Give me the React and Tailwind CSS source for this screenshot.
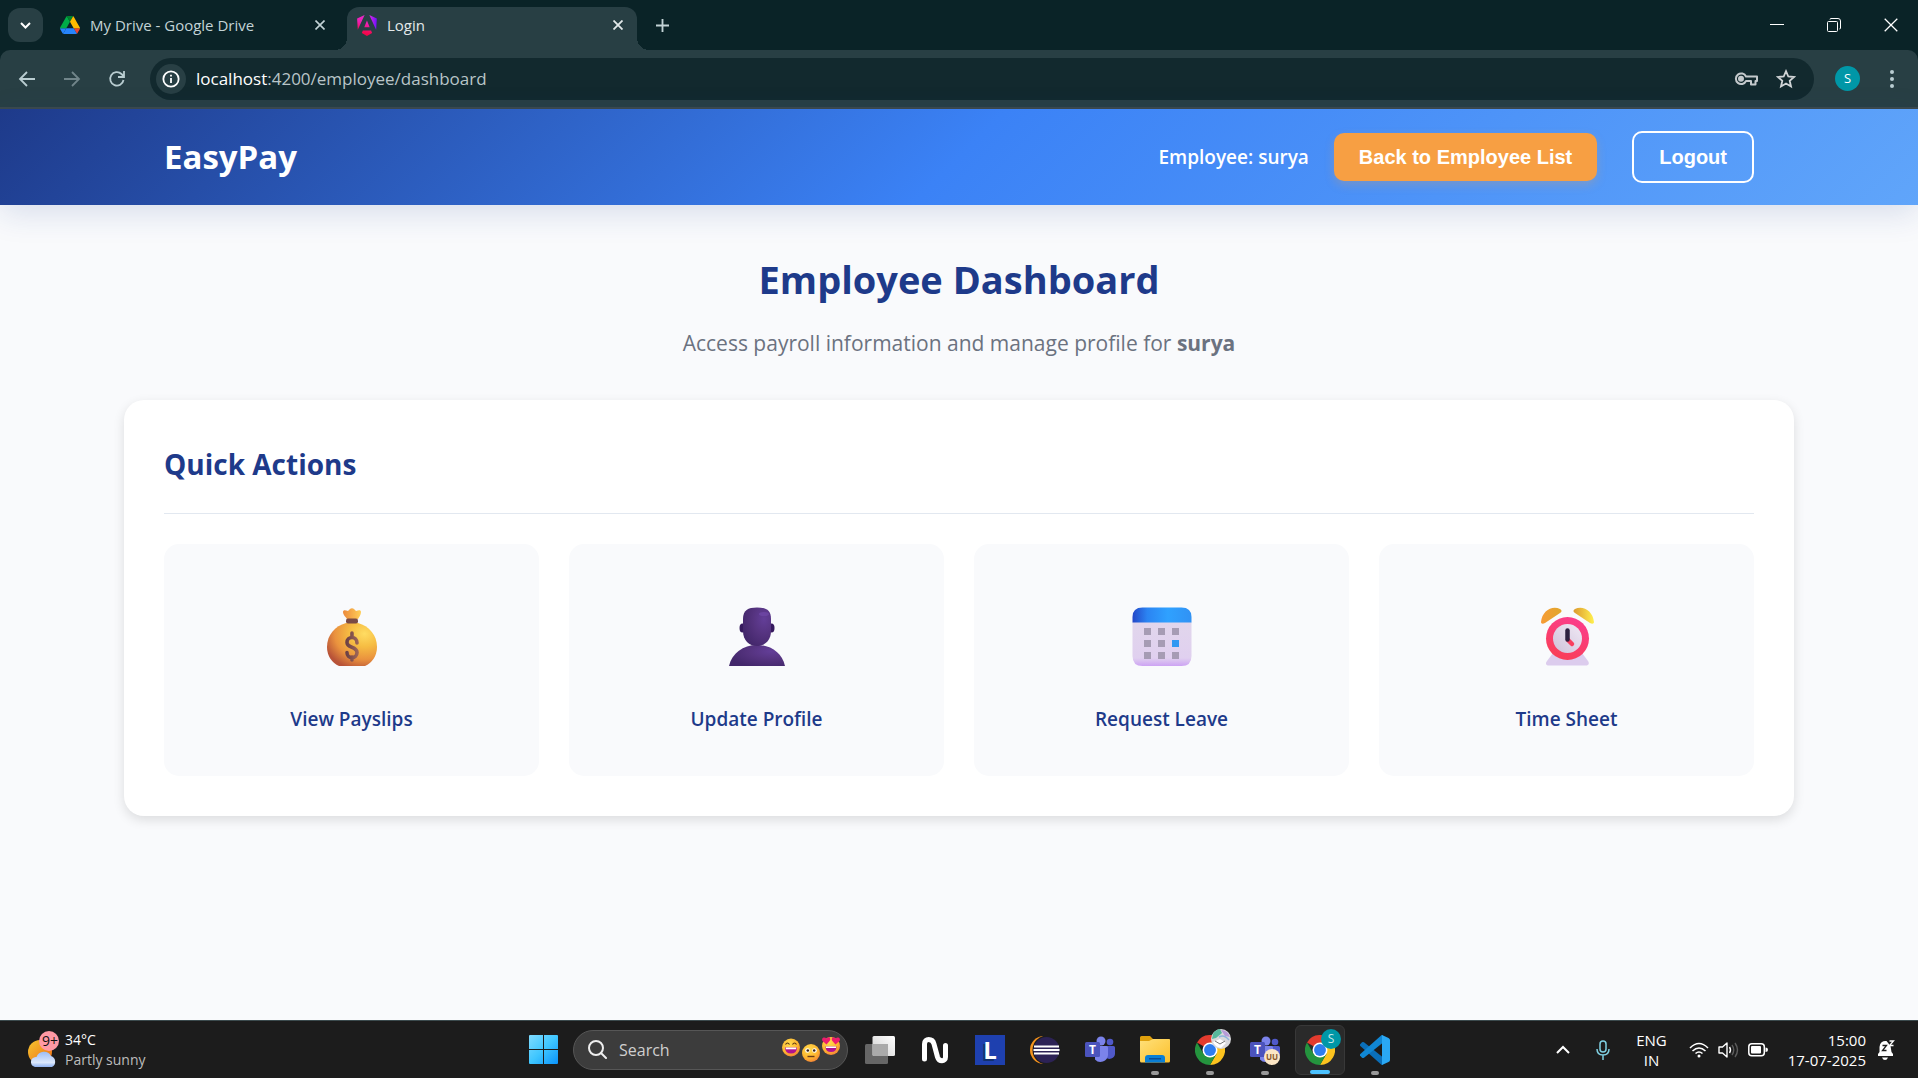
import React from "react";

const ui = "font-['Open_Sans','Noto_Sans',sans-serif]";

/* ---------- browser chrome icons ---------- */

function DriveIcon() {
  return (
    <svg width="20" height="18" viewBox="0 0 87.3 78" aria-hidden="true">
      <path fill="#2684fc" d="m6.6 66.85 3.85 6.65c.8 1.4 1.95 2.5 3.3 3.3L27.5 53H0c0 1.55.4 3.1 1.2 4.5z" />
      <path fill="#00ac47" d="M43.65 25 29.9 1.2c-1.35.8-2.5 1.9-3.3 3.3l-25.4 44A9.06 9.06 0 0 0 0 53h27.5z" />
      <path fill="#ea4335" d="M73.55 76.8c1.35-.8 2.5-1.9 3.3-3.3l1.6-2.75L86.1 57.5c.8-1.4 1.2-2.95 1.2-4.5H59.798l5.852 11.5z" />
      <path fill="#00832d" d="M43.65 25 57.4 1.2C56.05.4 54.5 0 52.9 0H34.4c-1.6 0-3.15.45-4.5 1.2z" />
      <path fill="#2684fc" d="M59.8 53H27.5L13.75 76.8c1.35.8 2.9 1.2 4.5 1.2h50.8c1.6 0 3.15-.45 4.5-1.2z" />
      <path fill="#ffba00" d="m73.4 26.5-12.7-22c-.8-1.4-1.95-2.5-3.3-3.3L43.65 25 59.8 53h27.45c0-1.55-.4-3.1-1.2-4.5z" />
    </svg>
  );
}

function AngularIcon() {
  return (
    <svg width="20" height="21" viewBox="0 0 223 236" aria-hidden="true">
      <defs>
        <linearGradient id="ng" x1="0.4" y1="1" x2="0.6" y2="0">
          <stop offset="0" stopColor="#f6003c" />
          <stop offset="0.25" stopColor="#f60a5c" />
          <stop offset="0.6" stopColor="#f01fb0" />
          <stop offset="1" stopColor="#e62ad0" />
        </linearGradient>
        <linearGradient id="ngSide" x1="0" y1="0" x2="1" y2="0">
          <stop offset="0" stopColor="#e02be0" />
          <stop offset="1" stopColor="#6c10ff" />
        </linearGradient>
      </defs>
      <path fill="url(#ng)" d="m168.972 202.017-57.933 33.056-57.934-33.056 11.783-28.556h92.301l11.783 28.556ZM111.039 62.675l30.357 73.803H80.681l30.358-73.803ZM7.937 165.115 0 39.192 84.69 0 7.937 165.115Z" />
      <path fill="url(#ngSide)" d="m222.077 39.192-8.019 125.923L137.387 0l84.69 39.192Z" />
    </svg>
  );
}

function Cross({ size = 10, width = 2 }) {
  return (
    <svg width={size} height={size} viewBox="0 0 10 10" fill="none" stroke="currentColor" strokeWidth={width} aria-hidden="true">
      <path d="M.5.5l9 9M9.5.5l-9 9" />
    </svg>
  );
}

function Line({ d, size = 20, width = 2, children }) {
  return (
    <svg width={size} height={size} viewBox="0 0 20 20" fill="none" stroke="currentColor" strokeWidth={width} aria-hidden="true">
      {d && <path d={d} />}
      {children}
    </svg>
  );
}

/* ---------- quick action pictures ---------- */

function MoneyBag() {
  return (
    <svg width="60" height="60" viewBox="0 0 60 60" aria-hidden="true">
      <defs>
        <radialGradient id="bag" cx="0.75" cy="0.25" r="0.85">
          <stop offset="0" stopColor="#ffdc62" />
          <stop offset="0.35" stopColor="#f6bd43" />
          <stop offset="0.7" stopColor="#ea923e" />
          <stop offset="1" stopColor="#b85338" />
        </radialGradient>
        <linearGradient id="bagTop" x1="0" x2="1">
          <stop offset="0" stopColor="#ec8a3c" />
          <stop offset="1" stopColor="#ffcf57" />
        </linearGradient>
        <linearGradient id="dollar" x1="0" x2="1">
          <stop offset="0" stopColor="#6d4146" />
          <stop offset="1" stopColor="#9a6356" />
        </linearGradient>
      </defs>
      <path fill="url(#bag)" d="M24 16h12c11 3 19 12 19 24 0 9-5 16-12 19H17C10 56 5 49 5 40c0-12 8-21 19-24Z" />
      <path fill="url(#bagTop)" d="M21 5c0-2 2-2 5-1l2-2c1-1 3-1 4 0l2 2c3-1 5-1 5 1 0 3-2 5-3 7H25c-1-2-4-4-4-7Z" />
      <rect x="24" y="11.500" width="12" height="5" rx="2" fill="#794a45" />
      <path d="M30 26v4m0 20v3M35 36c0-3.500-2.200-5.500-5-5.500s-5 2-5 5C25 41.500 35 39 35 45.500c0 3-2.200 5-5 5s-5-2-5-5" fill="none" stroke="url(#dollar)" strokeWidth="3.600" strokeLinecap="round" />
    </svg>
  );
}

function Bust() {
  return (
    <svg width="60" height="60" viewBox="0 0 60 60" aria-hidden="true">
      <defs>
        <radialGradient id="bust" cx="0.75" cy="0.3" r="0.8">
          <stop offset="0" stopColor="#633e98" />
          <stop offset="0.5" stopColor="#55337f" />
          <stop offset="1" stopColor="#43276b" />
        </radialGradient>
      </defs>
      <ellipse cx="15.500" cy="21" rx="3" ry="4.500" fill="#361a5e" />
      <ellipse cx="44.500" cy="21" rx="3" ry="4.500" fill="#361a5e" />
      <path fill="url(#bust)" d="M2 59C5 46 16 38 30 38s25 8 28 21Z" />
      <path fill="url(#bust)" d="M16 12C16 3 21 .5 30 .5S44 3 44 12v12c0 9-6 15-14 15s-14-6-14-15Z" />
      <ellipse cx="37" cy="7" rx="5" ry="2" fill="#7048a8" opacity="0.7" />
    </svg>
  );
}

function Calendar() {
  const dots = [0, 1, 2].flatMap((r) => [0, 1, 2].map((c) => [c, r]));
  return (
    <svg width="60" height="60" viewBox="0 0 60 60" aria-hidden="true">
      <defs>
        <linearGradient id="calTop" x1="0" x2="1">
          <stop offset="0" stopColor="#2447c8" />
          <stop offset="0.25" stopColor="#2b84f2" />
          <stop offset="0.6" stopColor="#2fa1ff" />
          <stop offset="1" stopColor="#3192f4" />
        </linearGradient>
        <linearGradient id="calBody" x1="0" y1="0" x2="0" y2="1">
          <stop offset="0" stopColor="#e1d6ec" />
          <stop offset="0.82" stopColor="#e0d0ef" />
          <stop offset="1" stopColor="#cda3f3" />
        </linearGradient>
      </defs>
      <path fill="url(#calBody)" d="M.5 15h59v34q0 10-10 10h-39Q.5 59 .5 49Z" />
      <path fill="url(#calTop)" d="M.5 15.500V10q0-9.500 10-9.500h39q10 0 10 9.500v5.500Z" />
      {dots.map(([c, r]) => (
        <rect key={`${c}${r}`} x={12 + c * 14} y={21 + r * 12} width="7" height="7" fill={c === 2 && r === 1 ? "#3198f2" : "#a69cb4"} />
      ))}
    </svg>
  );
}

function AlarmClock() {
  return (
    <svg width="60" height="60" viewBox="0 0 60 60" aria-hidden="true">
      <defs>
        <linearGradient id="bellL" x1="0" x2="1">
          <stop offset="0" stopColor="#f79b35" />
          <stop offset="1" stopColor="#e0a72c" />
        </linearGradient>
        <linearGradient id="bellR" x1="0" x2="1">
          <stop offset="0" stopColor="#dc982f" />
          <stop offset="1" stopColor="#fff04e" />
        </linearGradient>
        <linearGradient id="ring" x1="0.7" y1="0" x2="0.3" y2="1">
          <stop offset="0" stopColor="#fb3d8d" />
          <stop offset="1" stopColor="#f93e55" />
        </linearGradient>
        <linearGradient id="face" x1="1" y1="0" x2="0" y2="1">
          <stop offset="0" stopColor="#f0e9f5" />
          <stop offset="1" stopColor="#cfc1d9" />
        </linearGradient>
      </defs>
      <path fill="#dccced" d="M16 46h29l6 8c2 3 0 4.500-2 4.500H12c-3 0-4-2-2-4.500Z" />
      <path fill="url(#bellL)" d="M4 15C5 4 15-2 23 2c2 1 2 3 0 4L8 16c-2 1-4 1-4-1Z" />
      <path fill="url(#bellR)" d="M57 15C56 4 46-2 38 2c-2 1-2 3 0 4l15 10c2 1 4 1 4-1Z" />
      <circle cx="30.500" cy="31.500" r="21.500" fill="url(#ring)" />
      <circle cx="30.500" cy="31.500" r="14.500" fill="url(#face)" />
      <path d="M31 33l4 4" stroke="#f8405f" strokeWidth="4.500" strokeLinecap="round" />
      <path d="M30.500 23.500v9" stroke="#2d2040" strokeWidth="4.500" strokeLinecap="round" />
    </svg>
  );
}

/* ---------- taskbar pictures ---------- */

function ChromeLogo() {
  return (
    <svg width="30" height="30" viewBox="0 0 48 48" aria-hidden="true">
      <path fill="#e33b2e" d="M24 24 3.200 12A24 24 0 0 1 44.800 12H24Z" />
      <path fill="#fcc31e" d="M24 12h20.800A24 24 0 0 1 24 48l10.400-18Z" />
      <path fill="#24943e" d="M3.200 12A24 24 0 0 0 24 48l10.400-18L24 34 13.600 30Z" />
      <circle cx="24" cy="24" r="12" fill="#fff" />
      <circle cx="24" cy="24" r="9.500" fill="#2f7df0" />
    </svg>
  );
}

function TeamsLogo() {
  return (
    <svg width="30" height="28" viewBox="0 0 30 28" aria-hidden="true">
      <circle cx="16" cy="5" r="4.500" fill="#7b83eb" />
      <circle cx="25" cy="6" r="3.300" fill="#5059c9" />
      <path fill="#5059c9" d="M20 10h8.500q1.500 0 1.500 1.500V17a5.500 5.500 0 0 1-10 3.500Z" />
      <path fill="#7b83eb" d="M10 10h11.500q1.500 0 1.500 1.500V19a7.500 7.500 0 0 1-13 4.500Z" />
      <rect x="0" y="6" width="15" height="15" rx="1.500" fill="#4b53bc" />
      <text x="7.500" y="18" textAnchor="middle" fontSize="12" fontWeight="700" fill="#fff" fontFamily="Open Sans">T</text>
    </svg>
  );
}

function EclipseLogo() {
  return (
    <svg width="30" height="28" viewBox="0 0 30 28" aria-hidden="true">
      <circle cx="14" cy="14" r="14" fill="#f7941e" />
      <circle cx="17" cy="14" r="14.500" fill="#1c1c1c" />
      <circle cx="16.500" cy="14" r="13" fill="#2c2255" />
      <path fill="#fff" d="M4 9.500h25v2H4zM3.500 13h26v2h-26zM4 16.500h25v2H4z" />
    </svg>
  );
}

function Explorer() {
  return (
    <svg width="30" height="27" viewBox="0 0 30 27" aria-hidden="true">
      <defs>
        <linearGradient id="folder" x1="0" y1="0" x2="1" y2="1">
          <stop offset="0" stopColor="#ffe07a" />
          <stop offset="1" stopColor="#fcc02b" />
        </linearGradient>
      </defs>
      <path fill="#dfa00c" d="M0 1.500Q0 0 1.500 0H10l3 3h15q2 0 2 2v5H0Z" />
      <path fill="url(#folder)" d="M0 5h9l4-2h16q1 0 1 1v21q0 1.500-1.500 1.500h-27Q0 26.500 0 25Z" />
      <path fill="#0a7fd6" d="M5 26.500V22q0-3 3-3h14q3 0 3 3v4.500Z" />
      <path fill="#0a4d97" d="M9 22h12v1.500H9z" />
    </svg>
  );
}

function VsCode() {
  return (
    <svg width="30" height="30" viewBox="0 0 30 30" aria-hidden="true">
      <path fill="#0a6fba" d="M0 9.500 2 7.300q1-.6 2 0L22.500 22v8h-.8L.3 11Q-.4 10.200 0 9.500Z" />
      <path fill="#1087d4" d="M0 20.500 2 22.700q1 .6 2 0L22.500 8V0h-.8L.3 19q-.7.800-.3 1.500Z" />
      <path fill="#2aa8f4" d="M22 0l6.500 3Q30 4 30 5v20q0 1.500-1.500 2L22 30Z" />
    </svg>
  );
}

function NLogo() {
  return (
    <svg width="28" height="28" viewBox="0 0 28 28" fill="none" stroke="#fff" strokeWidth="5" strokeLinecap="round" strokeLinejoin="round" aria-hidden="true">
      <path d="M3.500 23V8c0-6 8-6 9.500 0l3.500 13c1.500 5 8 5 8 0V9.500" />
    </svg>
  );
}

function TaskView() {
  return (
    <svg width="30" height="28" viewBox="0 0 30 28" aria-hidden="true">
      <defs>
        <linearGradient id="tvw" x1="0" y1="1" x2="1" y2="0">
          <stop offset="0" stopColor="#d0d0d0" />
          <stop offset="1" stopColor="#fff" />
        </linearGradient>
      </defs>
      <rect x="0" y="8" width="23" height="20" rx="1.500" fill="#666" />
      <rect x="7.500" y="0" width="22.500" height="20" rx="1.500" fill="url(#tvw)" />
      <path fill="#aaa" d="M7.500 8H23v12H9q-1.500 0-1.500-1.500Z" />
    </svg>
  );
}

function StartLogo() {
  return (
    <svg width="29" height="29" viewBox="0 0 29 29" aria-hidden="true">
      <defs>
        <linearGradient id="win" gradientUnits="userSpaceOnUse" x1="0" y1="0" x2="29" y2="29">
          <stop offset="0" stopColor="#80dcff" />
          <stop offset="0.5" stopColor="#3fc6ff" />
          <stop offset="1" stopColor="#0a93fb" />
        </linearGradient>
      </defs>
      <path fill="url(#win)" d="M1 0h13v14H0V1q0-1 1-1ZM15 0h13q1 0 1 1v13H15ZM0 15h14v14H1q-1 0-1-1ZM15 15h14v13q0 1-1 1H15Z" />
    </svg>
  );
}

function SearchFaces() {
  return (
    <svg width="58" height="26" viewBox="0 0 58 26" aria-hidden="true">
      <defs>
        <radialGradient id="smile" cx="0.4" cy="0.3" r="0.8">
          <stop offset="0" stopColor="#ffdc4e" />
          <stop offset="0.6" stopColor="#fdb52f" />
          <stop offset="1" stopColor="#f0743a" />
        </radialGradient>
      </defs>
      <circle cx="9" cy="10.500" r="9" fill="url(#smile)" />
      <path d="M3.500 7.500q2-3 4 0M10.500 7.500q2-3 4 0" stroke="#5a3413" strokeWidth="1.200" fill="none" />
      <path fill="#b0128f" d="M3 10.500h12q0 6-6 6t-6-6Z" />
      <path fill="#fff" d="M3.800 10.500h10.400v1.800H3.800z" />
      <circle cx="29" cy="16" r="9" fill="url(#smile)" />
      <circle cx="25.500" cy="13.500" r="2.300" fill="#fff" />
      <circle cx="32.500" cy="13.500" r="2.300" fill="#fff" />
      <circle cx="25.800" cy="13.500" r="1.300" fill="#3b2417" />
      <circle cx="32.200" cy="13.500" r="1.300" fill="#3b2417" />
      <path fill="#6b3a18" d="M25.500 18.800h7v1.400h-7z" />
      <circle cx="49" cy="9" r="9" fill="url(#smile)" />
      <path fill="#b0128f" d="M43.500 9.500h11q0 5.500-5.500 5.500t-5.500-5.500Z" />
      <path fill="#fff" d="M44 9.500h10v1.500H44z" />
      <path fill="#ee1c6f" d="M44.500 7.500 40.500 4q-1.200-2.500 1-3.500 2-.5 2.800 1.200Q45.500-.5 47.500.5q1.500 1.200.3 3.200ZM53.500 7.500 50.200 3.700q-1.200-2 .3-3.200 2-1 3.200 1.200Q54.500 0 56.500.5q2.200 1 1 3.500Z" />
    </svg>
  );
}

function Weather() {
  return (
    <svg width="36" height="40" viewBox="0 0 36 40" aria-hidden="true">
      <defs>
        <linearGradient id="sun" x1="0" y1="0" x2="1" y2="1">
          <stop offset="0" stopColor="#f6c62f" />
          <stop offset="1" stopColor="#ee6a14" />
        </linearGradient>
        <linearGradient id="cloud" x1="0" y1="0" x2="0" y2="1">
          <stop offset="0" stopColor="#9dbdf5" />
          <stop offset="0.7" stopColor="#dce8fc" />
          <stop offset="1" stopColor="#8fb2f2" />
        </linearGradient>
      </defs>
      <circle cx="13" cy="22" r="12" fill="url(#sun)" />
      <path fill="url(#cloud)" d="M8 37a5 5 0 0 1-1-9.500q1-.8 2.500-.5a8 8 0 0 1 14.500-1 6 6 0 0 1 1 11Z" />
      <circle cx="22" cy="11" r="10" fill="#ff99a4" />
      <text x="23" y="16" textAnchor="middle" fontSize="14" fill="#111" fontFamily="Open Sans">9+</text>
    </svg>
  );
}

/* ---------- page ---------- */

const actions = [
  { label: "View Payslips", Icon: MoneyBag },
  { label: "Update Profile", Icon: Bust },
  { label: "Request Leave", Icon: Calendar },
  { label: "Time Sheet", Icon: AlarmClock },
];

const iconBtn = "flex items-center justify-center shrink-0";

function TabStrip() {
  return (
    <div className="flex h-[50px] items-end bg-[#0a2327] pl-2 text-[#c3d3d6]">
      <button aria-label="Search tabs" className={`${iconBtn} mb-2 h-[34px] w-[35px] rounded-xl bg-[#283f44] text-white`}>
        <svg width="11" height="7" viewBox="0 0 11 7" fill="none" stroke="currentColor" strokeWidth="2" aria-hidden="true"><path d="M1 1l4.500 4.500L10 1" /></svg>
      </button>
      <div className="flex h-[50px] w-[292px] items-center pl-[17px] pr-[10px]">
        <DriveIcon />
        <span className="ml-[10px] flex-1 truncate text-[15px]">My Drive - Google Drive</span>
        <button aria-label="Close tab" className={`${iconBtn} w-[10px]`}><Cross size={10} width={1.6} /></button>
      </div>
      <span className="h-3 w-3 bg-[radial-gradient(circle_at_top_left,transparent_12px,#283f44_12px)]" />
      <div className="flex h-[43px] w-[290px] items-center rounded-t-xl bg-[#283f44] pb-[7px] pl-[10px] pr-[14px] text-[#e3e9ea]">
        <AngularIcon />
        <span className="ml-[10px] flex-1 text-[15px]">Login</span>
        <button aria-label="Close tab" className={iconBtn}><Cross size={10} width={1.8} /></button>
      </div>
      <span className="h-3 w-3 bg-[radial-gradient(circle_at_top_right,transparent_12px,#283f44_12px)]" />
      <button aria-label="New tab" className={`${iconBtn} mb-[18px] ml-[7px]`}>
        <svg width="13" height="13" viewBox="0 0 14 14" stroke="currentColor" strokeWidth="2" aria-hidden="true"><path d="M7 0v14M0 7h14" /></svg>
      </button>
      <div className="mb-[18px] ml-auto flex items-center gap-[43px] pr-5 text-white">
        <button aria-label="Minimize" className={iconBtn}>
          <svg width="14" height="14" viewBox="0 0 14 14" stroke="currentColor" aria-hidden="true"><path d="M0 6.500h14" /></svg>
        </button>
        <button aria-label="Restore" className={iconBtn}>
          <svg width="14" height="14" viewBox="0 0 14 14" fill="none" stroke="currentColor" aria-hidden="true"><rect x=".5" y="3.500" width="10" height="10" rx="1" /><path d="M3 1.500q0-1 1-1h7q2.500 0 2.500 2.500v7q0 1-1 1" /></svg>
        </button>
        <button aria-label="Close" className={iconBtn}><Cross size={14} width={0.9} /></button>
      </div>
    </div>
  );
}

function Toolbar() {
  return (
    <div className="bg-[#0a2327]">
      <div className="flex h-[59px] items-center rounded-t-[10px] border-b-2 border-[#3c494c] bg-[#283f44] pl-[17px] pr-4 text-[#b9cdd1]">
        <div className="flex items-center gap-[25px]">
          <button aria-label="Back" className={iconBtn}><Line width={1.8} d="M18 10H3M10 3l-7 7 7 7" /></button>
          <button aria-label="Forward" className={`${iconBtn} text-[#71858a]`}><Line width={1.8} d="M2 10h15M10 3l7 7-7 7" /></button>
          <button aria-label="Reload" className={iconBtn}><Line width={1.8} d="M16.500 11a6.700 6.700 0 1 1-2-6l2.500 2.500M17 2v6h-6" /></button>
        </div>
        <div className="ml-[23px] flex h-[42px] flex-1 items-center rounded-full bg-[#12292e] pl-[6px] pr-[18px]">
          <button aria-label="Site information" className={`${iconBtn} h-[30px] w-[30px] rounded-full bg-[#283f44] text-white`}>
            <Line size={18}><circle cx="10" cy="10" r="8.500" /><path d="M10 9v5.500M10 5.300v2" /></Line>
          </button>
          <a href="#dashboard" aria-label="Address" className="ml-[10px] flex-1 text-[17px] text-[#b9c5c8]"><span className="text-white">localhost</span>:4200/employee/dashboard</a>
          <button aria-label="Passwords" className={`${iconBtn} mr-[18px]`}>
            <svg width="24" height="16" viewBox="0 0 24 16" fill="none" stroke="#c4c9cc" strokeWidth="2" aria-hidden="true">
              <path d="M12 5.500h11v4.500h-1.500v3.500h-4.500V10h-5a5.300 5.300 0 1 1 0-4.500Z" strokeLinejoin="round" />
              <circle cx="7" cy="7.700" r="2" fill="#c4c9cc" />
            </svg>
          </button>
          <button aria-label="Bookmark" className={iconBtn}>
            <Line><path stroke="#d0d4d6" strokeWidth="1.800" d="m10 2.200 2.300 5.300 5.700.5-4.300 3.800 1.300 5.700-5-3-5 3 1.300-5.700L2 8l5.700-.5Z" /></Line>
          </button>
        </div>
        <button aria-label="Profile" className={`${iconBtn} ml-[21px] h-[25px] w-[25px] rounded-full bg-[#0097a7] text-[13px] text-white`}>S</button>
        <button aria-label="Menu" className={`${iconBtn} ml-[22px]`}>
          <svg width="20" height="20" viewBox="0 0 20 20" fill="currentColor" aria-hidden="true"><circle cx="10" cy="3" r="2" /><circle cx="10" cy="10" r="2" /><circle cx="10" cy="17" r="2" /></svg>
        </button>
      </div>
    </div>
  );
}

function SiteHeader() {
  return (
    <header className="bg-[linear-gradient(135deg,#1e3a8a_0%,#3b82f6_50%,#60a5fa_100%)] shadow-[0_8px_32px_rgba(30,58,138,0.15)]">
      <div className="mx-auto flex h-24 max-w-[1590px] items-center text-white">
        <div className="text-[33px] font-bold">EasyPay</div>
        <span className="ml-auto mr-[25px] text-[19px] font-semibold">Employee: surya</span>
        <button className="mr-[35px] h-12 rounded-[10px] bg-[#f79f43] px-[25px] font-['Liberation_Sans',Arial,sans-serif] text-xl font-bold shadow-[0_4px_10px_rgba(247,159,67,0.25)]">Back to Employee List</button>
        <button className="h-[52px] rounded-[10px] border-2 border-white px-[25px] font-['Liberation_Sans',Arial,sans-serif] text-xl font-bold">Logout</button>
      </div>
    </header>
  );
}

function Dashboard() {
  return (
    <main className="mx-auto w-full max-w-[1670px] flex-1 pt-11 text-[#1e3a8a]">
      <h1 className="text-center text-[38px] font-bold leading-[60px]">Employee Dashboard</h1>
      <p className="mt-4 text-center text-[21px] leading-9 text-[#6b7280]">Access payroll information and manage profile for <strong className="font-bold">surya</strong></p>
      <section className="mt-[39px] rounded-[20px] bg-white p-10 shadow-[0_4px_12px_rgba(0,0,0,0.12)]">
        <h2 className="border-b border-[#e2e8f0] pb-6 text-[28px] font-bold leading-[49px]">Quick Actions</h2>
        <div className="mt-[30px] grid grid-cols-4 gap-[30px]">
          {actions.map(({ label, Icon }) => (
            <button key={label} className="flex flex-col items-center rounded-[15px] bg-[#f9fafc] pb-[42px] pt-10">
              <span className="flex h-[106px] items-center"><Icon /></span>
              <span className="mt-[14px] text-[19px] font-semibold leading-[30px]">{label}</span>
            </button>
          ))}
        </div>
      </section>
    </main>
  );
}

function TaskButton({ label, children, mark, active, badge }) {
  return (
    <button aria-label={label} className={`relative flex h-[50px] w-[50px] shrink-0 items-center justify-center rounded-md ${active ? "border border-[#383838] bg-[#2a2a2a]" : ""}`}>
      {children}
      {badge}
      {mark && <span className={`absolute bottom-0 h-1 rounded-full ${active ? "w-5 bg-[#4cc2ff]" : "w-2 bg-[#9a9a9a]"}`} />}
    </button>
  );
}

function Taskbar() {
  return (
    <footer className="grid h-[58px] shrink-0 grid-cols-[1fr_auto_1fr] items-center border-t border-[#3b4a4d] bg-[#1c1c1c] text-[15px] leading-5 text-white">
      <button className="flex items-center pl-[27px] text-left">
        <Weather />
        <span className="ml-[2px] block text-sm leading-5"><span className="block">34°C</span><span className="block text-[#bdbdbd]">Partly sunny</span></span>
      </button>
      <div className="flex items-center gap-[5px]">
        <TaskButton label="Start"><StartLogo /></TaskButton>
        <label className="mr-[2px] flex h-10 w-[275px] items-center rounded-full border border-[#565656] bg-[#3c3c3c] pl-[14px] pr-[7px]">
          <svg width="19" height="19" viewBox="0 0 19 19" fill="none" stroke="#eee" strokeWidth="2" aria-hidden="true"><circle cx="8" cy="8" r="7" /><path d="M13 13l5 5" strokeLinecap="round" /></svg>
          <input aria-label="Search" placeholder="Search" className="ml-3 w-0 flex-1 bg-transparent text-base placeholder:text-[#cfcfcf]" />
          <SearchFaces />
        </label>
        <TaskButton label="Task view"><TaskView /></TaskButton>
        <TaskButton label="N app"><NLogo /></TaskButton>
        <TaskButton label="L app"><span className="flex h-[30px] w-[30px] items-center justify-center bg-[#1e40af] text-2xl font-bold [text-shadow:-2px_2px_0_#12306e]">L</span></TaskButton>
        <TaskButton label="Eclipse"><EclipseLogo /></TaskButton>
        <TaskButton label="Teams"><TeamsLogo /></TaskButton>
        <TaskButton label="File Explorer" mark><Explorer /></TaskButton>
        <TaskButton label="Chrome" mark badge={
          <svg className="absolute right-[4px] top-1" width="20" height="20" viewBox="0 0 20 20" aria-hidden="true">
            <circle cx="10" cy="10" r="10" fill="#d9d9dc" />
            <path fill="#57b89c" d="M2 5a10 10 0 0 1 7-5l2 4-6 5-4 1Z" />
            <path fill="#b79bd8" d="M10 1a9 9 0 0 1 9 7l-5-1Z" />
            <path stroke="#8eb3dc" strokeWidth="1.500" fill="none" d="M8 8q5-3 10 3" />
            <path fill="#fff" d="M2 13l7-3 6 4-5 5q-6-1-8-6Z" />
            <path stroke="#777" strokeWidth="1" fill="none" d="M4 12l5 3 5-3" />
          </svg>
        }><ChromeLogo /></TaskButton>
        <TaskButton label="Teams work" mark badge={<span className="absolute bottom-[10px] right-[10px] flex h-4 w-4 items-center justify-center rounded-full bg-[#fbe6c4] text-[8px] font-bold text-[#8a5a2b]">UU</span>}><TeamsLogo /></TaskButton>
        <TaskButton label="Chrome, S" mark active badge={<span className="absolute right-[3px] top-[3px] flex h-5 w-5 items-center justify-center rounded-full bg-[#0097a7] text-xs text-[#c9e9ec]">S</span>}><ChromeLogo /></TaskButton>
        <TaskButton label="Visual Studio Code" mark><VsCode /></TaskButton>
      </div>
      <div className="flex items-center justify-end pr-[23px] text-[15px] leading-5">
        <button aria-label="Hidden icons" className={iconBtn}>
          <svg width="14" height="9" viewBox="0 0 14 9" fill="none" stroke="#fff" strokeWidth="2" aria-hidden="true"><path d="M1 8l6-6 6 6" /></svg>
        </button>
        <button aria-label="Microphone" className={`${iconBtn} ml-[26px]`}>
          <svg width="14" height="20" viewBox="0 0 14 20" fill="none" stroke="#7fd0e2" strokeWidth="1.500" aria-hidden="true"><rect x="4" y="1" width="6" height="11" rx="3" /><path d="M1 9q0 6 6 6t6-6M7 15v5" /></svg>
        </button>
        <button className="ml-[26px] text-center"><span className="block">ENG</span><span className="block">IN</span></button>
        <button aria-label="Network, volume and battery" className="ml-[22px] flex items-center gap-[9px]">
          <svg width="20" height="16" viewBox="0 0 20 16" fill="none" stroke="#fff" strokeWidth="1.600" aria-hidden="true"><path d="M1 6q9-9 18 0M3.500 9q6.500-6 13 0M6.500 11.500q3.500-3 7 0" /><circle cx="10" cy="14" r="1.500" fill="#fff" stroke="none" /></svg>
          <svg width="21" height="18" viewBox="0 0 21 18" fill="none" stroke="#fff" strokeWidth="1.400" aria-hidden="true"><path d="M1 6h3.500L9 2v14l-4.500-4H1Z" strokeLinejoin="round" /><path d="M11.500 6q2 3 0 6" /><path d="M14 4q3.500 5 0 10M17 2q5 7 0 14" stroke="#5c5c5c" /></svg>
          <svg width="20" height="14" viewBox="0 0 20 14" aria-hidden="true"><rect x=".8" y=".8" width="15.500" height="12" rx="3" fill="none" stroke="#fff" strokeWidth="1.500" /><rect x="3" y="3" width="10" height="7.500" rx="1" fill="#fff" /><path fill="#fff" d="M17.500 4.500q2.500 0 2.500 2.300t-2.500 2.300Z" /></svg>
        </button>
        <button className="ml-[20px] text-right"><span className="block">15:00</span><span className="block">17-07-2025</span></button>
        <button aria-label="Notifications" className={`${iconBtn} ml-[11px]`}>
          <svg width="18" height="20" viewBox="0 0 18 20" aria-hidden="true">
            <path fill="#fff" d="M1 16v-2l1.500-2V7a6 6 0 0 1 7-6l4 5 1 6 1.500 2v2ZM5 17.500h6q-1 2.500-3 2.500t-3-2.500Z" />
            <path d="M5.500 5.500h4l-4 5h4" stroke="#1c1c1c" strokeWidth="1.300" fill="none" />
            <path d="M12.500 1h4l-4 4.500h4" stroke="#fff" strokeWidth="1.300" fill="none" />
          </svg>
        </button>
      </div>
    </footer>
  );
}

export default function App() {
  return (
    <div className={`flex min-h-screen flex-col bg-[#f9fafc] ${ui}`}>
      <TabStrip />
      <Toolbar />
      <SiteHeader />
      <Dashboard />
      <Taskbar />
    </div>
  );
}
